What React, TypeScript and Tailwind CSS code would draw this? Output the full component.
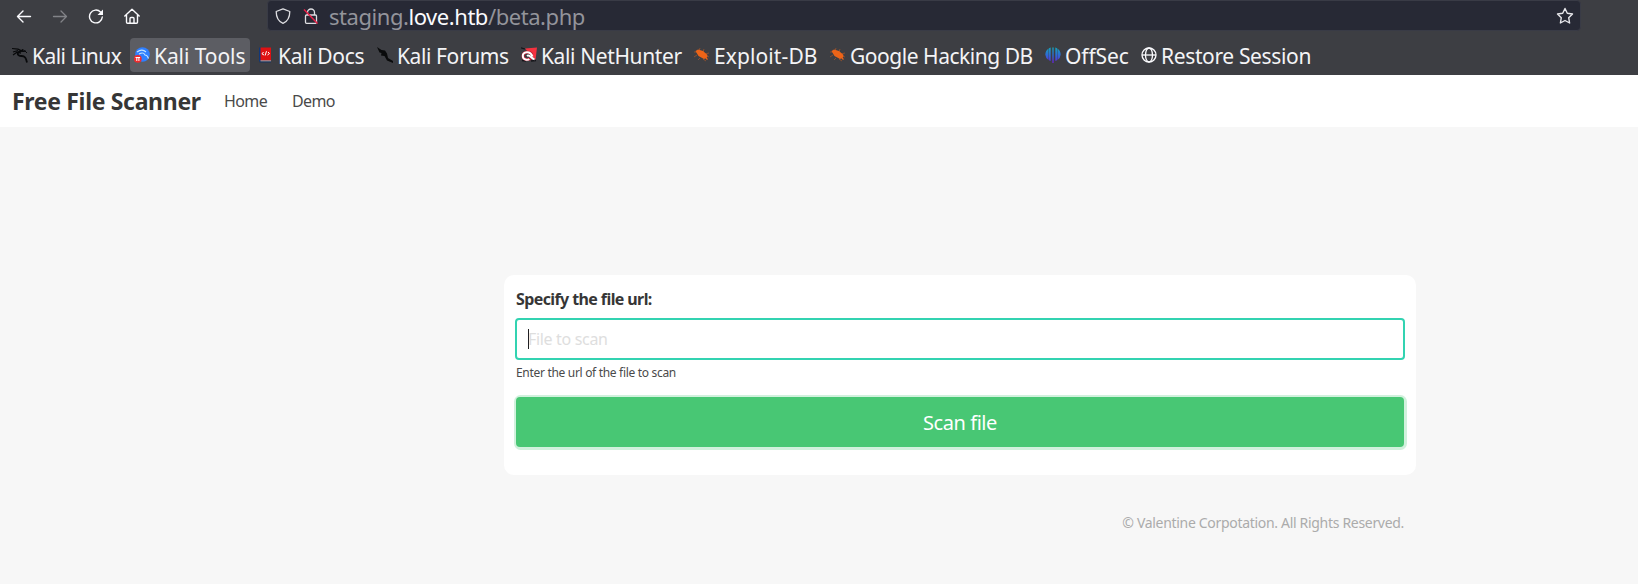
import type { ReactNode } from "react";

const Dragon = () => (
  <svg width="16" height="16" viewBox="0 0 16 16" fill="none" stroke="#08090b">
    <path d="M0 1.500 6 2.200 11 4.500 14 4.200M1 5 6 3.500M1 8 5 5.200 9 6.200" strokeWidth="1.200" />
    <path d="M11 3.500C4 4.500 4.500 9 9.500 9c3.500 0 4.500 2 5.500 6.500" strokeWidth="1.800" />
    <path d="m10 2.500 2.500 1 2.500 2.500" strokeWidth="1" />
  </svg>
);

const Tools = () => (
  <svg width="16" height="16" viewBox="0 0 16 16">
    <circle cx="8.500" cy="7.500" r="7.300" fill="#2f7fff" />
    <path d="M3 5c4-3 7-2 9 0M5 7c4-2 5-1 6 1 2 0 3 2 3.500 3.500" stroke="#c3e3ff" strokeWidth="1.100" fill="none" />
    <circle cx="3.800" cy="11.800" r="3.900" fill="#f02b2d" />
    <path d="M1.500 10.500h4.600M2.800 10.500v3.500M4.900 10.500v3.500" stroke="#fff" strokeWidth="1" />
  </svg>
);

const Docs = () => (
  <svg width="14" height="16" viewBox="0 0 14 16">
    <path d="M1 .500h2v14h-2z" fill="#10387a" />
    <path d="M2.500 .500H13V13.500H2.500z" fill="#df1113" />
    <path d="M2.500 13.500H13v1H2.500z" fill="#c4c4cc" />
    <path d="M1.500 14.500H13v1H1.500z" fill="#173260" />
    <path d="M5.500 5 4 6.800 6 8M10 5l1.500 1.500L9.500 8M8.500 4.200 7.100 8.500" stroke="#fff" strokeWidth="1" fill="none" />
  </svg>
);

const Forums = () => (
  <svg width="16" height="16" viewBox="0 0 16 16">
    <path d="M0 0 4.500 3 8 3.500 10 6.500 11 11l5 3v2l-6-2.500L7.500 9 4 8.500 4.500 6 2.500 5.500z" fill="#090a0b" />
  </svg>
);

const NetHunter = () => (
  <svg width="16" height="16" viewBox="0 0 16 16" fill="none">
    <path d="M4 1.500 16 .5 14.500 13z" fill="#f5323f" />
    <path d="M0 .8 4 2M1 13.500l4 .5M10 14l5-.5" stroke="#15151a" strokeWidth="1.300" />
    <path d="M11 8C9 3.500 2 5 2 9s6 4.500 8 2" stroke="#b81c31" strokeWidth="3" />
    <path d="M11.500 9.500C9 3 1.800 5 1.800 9c0 4 5 4.500 6.500 3M6 9c3-2.200 4 3 7.500 3.200" stroke="#fff" strokeWidth="2" />
  </svg>
);

const Bug = () => (
  <svg width="16" height="16" viewBox="0 0 16 16" fill="none">
    <path d="m5 4 1-3M9 5l1-3M11 7l4-1M12 9l3 1M9 12l3 2M6 11l-2 2M3 8 0 10M3 5 0 5" stroke="#9d532c" strokeWidth=".8" />
    <path d="M1.500 4 4 2.500l5 1.500 4.500 4-.5 2.500-3 1.500L4.500 9z" fill="#ed6418" />
    <path d="m10 9 3.500 3.500" stroke="#ed6418" strokeWidth="1.300" />
  </svg>
);

const OffSec = () => (
  <svg width="16" height="16" viewBox="0 0 16 16">
    <defs>
      <linearGradient id="offsec" gradientUnits="userSpaceOnUse" x1="0" y1="0" x2="0" y2="16">
        <stop stopColor="#13a6b6" />
        <stop offset=".55" stopColor="#3165d8" />
        <stop offset="1" stopColor="#6820c9" />
      </linearGradient>
    </defs>
    <path d="M3.500 1.500v11.500Q.5 11 .3 7.500.5 3.500 3.500 1.500M3.900 1.200 5.700.5V14l-1.800-.7zM7.300.5h1.400V16H7.300zM10.300.5l1.800.7v12.100l-1.800.7zM12.500 1.500q3 2 3.200 6Q15.500 11 12.500 13z" fill="url(#offsec)" />
  </svg>
);

const Globe = () => (
  <svg width="16" height="16" viewBox="0 0 16 16" fill="none" stroke="#fbfbfe" strokeWidth="1.300">
    <circle cx="8" cy="8" r="7" />
    <ellipse cx="8" cy="8" rx="3.500" ry="7" />
    <path d="M1 8h14" />
  </svg>
);

const Bookmark = ({ icon, label, box, text }: { icon: ReactNode; label: string; box: string; text: string }) => (
  <div className={`flex h-[34px] shrink-0 items-center rounded pl-1 ${box}`}>
    <span className="flex w-5 shrink-0">{icon}</span>
    <span className={`pt-[2px] text-[21px] leading-8 ${text}`}>{label}</span>
  </div>
);

const Toolbar = () => (
  <div className="flex h-8 items-start text-[#fbfbfe]">
    <div className="flex h-8 w-[267px] shrink-0 items-center gap-5 pl-4">
      <svg width="16" height="16" viewBox="0 0 16 16" fill="none" stroke="currentColor" strokeWidth="1.400" strokeLinecap="round" strokeLinejoin="round">
        <path d="M14.500 8.500H1.500M7 3 1.500 8.500 7 14" />
      </svg>
      <svg width="16" height="16" viewBox="0 0 16 16" fill="none" stroke="#828388" strokeWidth="1.300" strokeLinecap="round" strokeLinejoin="round">
        <path d="M1.500 8.500h13M9 3l5.500 5.500L9 14" />
      </svg>
      <svg width="16" height="16" viewBox="0 0 16 16" fill="none">
        <path d="M12.500 4A6.400 6.400 0 1 0 14.300 9" stroke="currentColor" strokeWidth="1.400" strokeLinecap="round" />
        <path d="M15 1.500v5.500H9.500z" fill="currentColor" />
      </svg>
      <svg width="16" height="16" viewBox="0 0 16 16" fill="none" stroke="currentColor" strokeWidth="1.400" strokeLinecap="round" strokeLinejoin="round">
        <path d="M.8 8 8 1.200 15.200 8M2.500 7v7.300q0 1 1 1h9q1 0 1-1V7M6 15v-4.500q0-1 1-1h2q1 0 1 1V15" />
      </svg>
    </div>
    <div className="flex h-[31px] w-[1314px] shrink-0 items-center rounded-[4px] border border-[#393b46] bg-[#272935] pl-[7px] pr-[6px]">
      <svg className="mr-3 shrink-0" width="16" height="16" viewBox="0 0 16 16" fill="none" stroke="#dedee2" strokeWidth="1.300" strokeLinejoin="round">
        <path d="M8 .8 14.800 3.500C14.800 9.500 12.500 13.500 8 15.300 3.500 13.500 1.200 9.500 1.200 3.500z" />
      </svg>
      <svg className="shrink-0" width="16" height="16" viewBox="0 0 16 16" fill="none">
        <path d="M4.500 7V4.500a3.500 3.500 0 0 1 7 0V7M3.500 7h9q1 0 1 1v6.300q0 1-1 1h-9q-1 0-1-1V8q0-1 1-1z" stroke="#dedee2" strokeWidth="1.300" />
        <path d="m1 1.500 13.500 14" stroke="#e92048" strokeWidth="1.500" />
      </svg>
      <span className="ml-[10px] whitespace-nowrap pt-[2px] text-[22px] leading-[27px] tracking-[-0.45px] text-[#93949b]">
        staging.<span className="text-[#fbfbfe]">love.htb</span>/beta.php
      </span>
      <svg className="ml-auto shrink-0" width="18" height="18" viewBox="0 0 18 18" fill="none" stroke="#e8e8ec" strokeWidth="1.400" strokeLinejoin="round">
        <path d="m9 1.500 2.300 4.800 5.200.7-3.800 3.700.9 5.300L9 13.500 4.400 16l.9-5.300L1.500 7l5.200-.7z" />
      </svg>
    </div>
  </div>
);

export default function App() {
  return (
    <div className="flex h-[584px] w-[1638px] flex-col overflow-hidden bg-[#f7f7f7] font-['Noto_Sans',sans-serif]">
      <header className="h-[75px] shrink-0 bg-[#3d3e43]">
        <Toolbar />
        <div className="flex h-[43px] items-start whitespace-nowrap pl-2 pt-[6px] text-[#f4f4f6]">
          <Bookmark icon={<Dragon />} label="Kali Linux" box="w-[122px]" text="tracking-[-0.53px]" />
          <Bookmark icon={<Tools />} label="Kali Tools" box="w-[120px] bg-[#5c5d63]" text="tracking-[-0.08px]" />
          <Bookmark icon={<Docs />} label="Kali Docs" box="ml-1 w-[119px]" text="tracking-[-0.35px]" />
          <Bookmark icon={<Forums />} label="Kali Forums" box="w-[144px]" text="tracking-[-0.4px]" />
          <Bookmark icon={<NetHunter />} label="Kali NetHunter" box="w-[173px]" text="tracking-[-0.38px]" />
          <Bookmark icon={<Bug />} label="Exploit-DB" box="w-[136px]" text="tracking-[0.1px]" />
          <Bookmark icon={<Bug />} label="Google Hacking DB" box="w-[215px]" text="tracking-[-0.47px]" />
          <Bookmark icon={<OffSec />} label="OffSec" box="w-[96px]" text="tracking-[-0.1px]" />
          <Bookmark icon={<Globe />} label="Restore Session" box="w-[180px]" text="tracking-[-0.36px]" />
        </div>
      </header>
      <nav className="flex h-[52px] shrink-0 items-center whitespace-nowrap bg-white pl-3 text-[#4a4a4a]">
        <a className="w-[212px] pt-px text-[23px] font-bold tracking-[-0.32px] text-[#363636]">Free File Scanner</a>
        <a className="w-[68px] text-base tracking-[-0.6px]">Home</a>
        <a className="text-base tracking-[-0.6px]">Demo</a>
      </nav>
      <main className="ml-[504px] mt-[148px] w-[912px]">
        <form className="h-[200px] rounded-[10px] bg-white px-3 pt-3">
          <label className="block h-[31px] text-base font-bold leading-6 tracking-[-0.6px] text-[#363636]">Specify the file url:</label>
          <div className="-mx-px flex h-[42px] items-center rounded-[4px] border-2 border-[#32d3b1] pl-[11px]">
            <span className="h-5 w-px bg-[#202020]" />
            <span className="-ml-px text-base tracking-[-0.33px] text-[#dedede]">File to scan</span>
          </div>
          <p className="mt-1 h-[18px] text-xs leading-[18px] tracking-[-0.31px] text-[#4a4a4a]">Enter the url of the file to scan</p>
          <button type="button" className="mt-[15px] block h-[50px] w-full rounded-[4px] bg-[#48c774] pt-[2px] text-xl tracking-[-0.45px] text-white shadow-[0.5px_0.5px_0_2.5px_#d1f1dd]">
            Scan file
          </button>
        </form>
        <p className="mt-[37px] pr-3 text-right text-sm leading-[22px] tracking-[-0.31px] text-[#ababab]">© Valentine Corpotation. All Rights Reserved.</p>
      </main>
    </div>
  );
}
